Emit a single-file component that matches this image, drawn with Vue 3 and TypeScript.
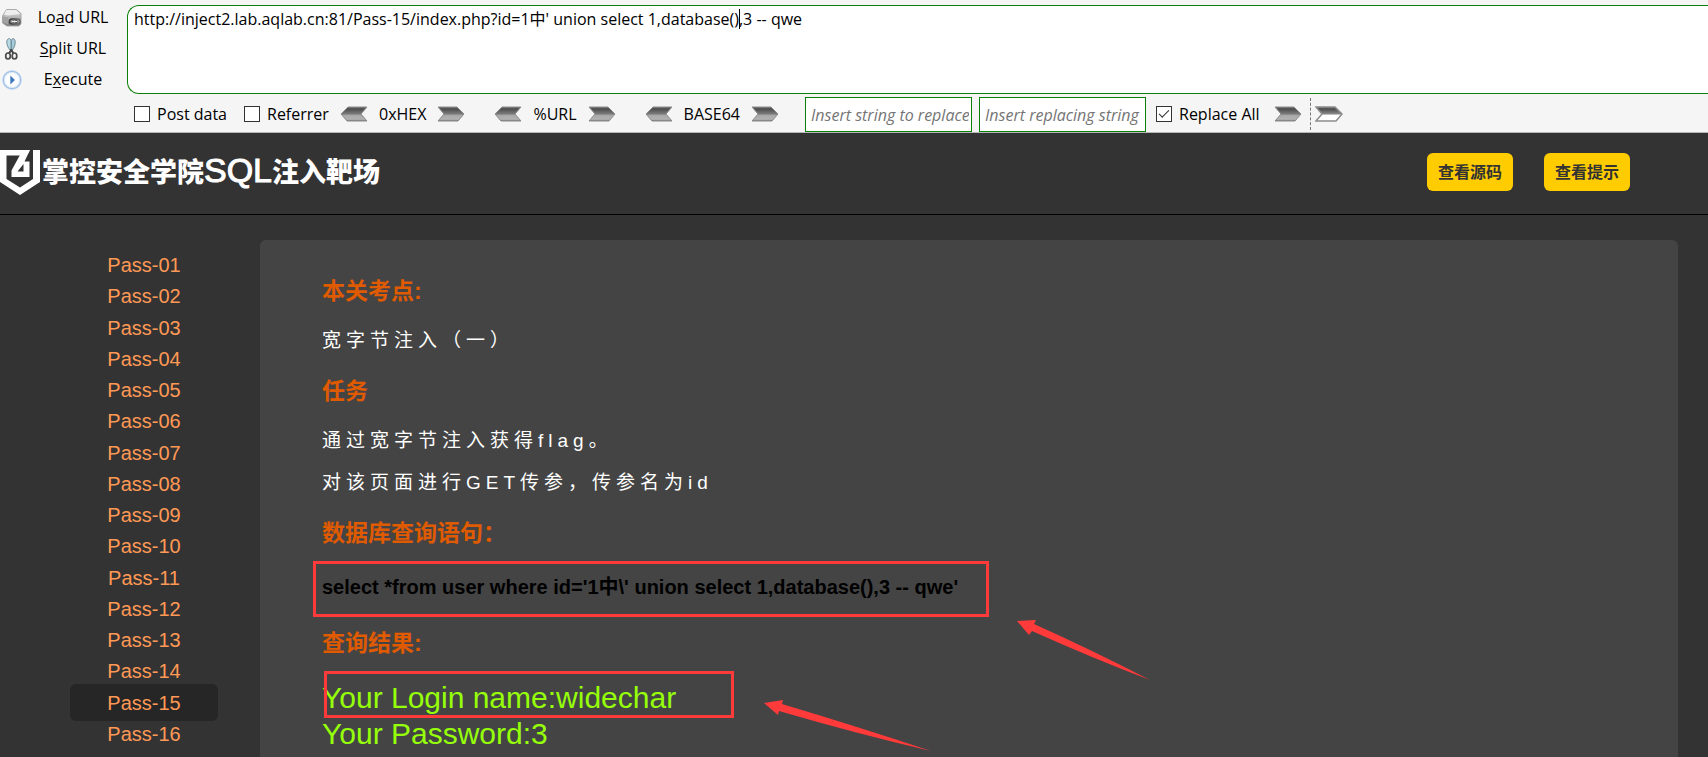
<script setup lang="ts">
import { ref } from 'vue'

const url = ref("http://inject2.lab.aqlab.cn:81/Pass-15/index.php?id=1中' union select 1,database(),3 -- qwe")
const postData = ref(false)
const referrer = ref(false)
const replaceAll = ref(true)
const searchText = ref('')
const replaceText = ref('')

const encoders: string[] = ['0xHEX', '%URL', 'BASE64']
const levels: string[] = Array.from({ length: 16 }, (_, i) => 'Pass-' + String(i + 1).padStart(2, '0'))
const current = 'Pass-15'
</script>

<template>
  <div class="page">
    <svg class="defs" width="0" height="0" aria-hidden="true">
      <defs>
        <linearGradient id="metal" x1="0" y1="0" x2="0" y2="1">
          <stop offset="0" stop-color="#6a6a6a" />
          <stop offset="0.15" stop-color="#4e4e4e" />
          <stop offset="0.5" stop-color="#7c7c7c" />
          <stop offset="0.6" stop-color="#a9a9a9" />
          <stop offset="0.88" stop-color="#b2b2b2" />
          <stop offset="1" stop-color="#6e6e6e" />
        </linearGradient>
        <linearGradient id="metal-open" x1="0" y1="0" x2="0" y2="1">
          <stop offset="0" stop-color="#6a6a6a" />
          <stop offset="0.15" stop-color="#4e4e4e" />
          <stop offset="0.5" stop-color="#8a8a8a" />
          <stop offset="0.58" stop-color="#ffffff" />
          <stop offset="1" stop-color="#ffffff" />
        </linearGradient>
        <linearGradient id="disk" x1="0" y1="0" x2="0" y2="1">
          <stop offset="0" stop-color="#e2e2e2" />
          <stop offset="0.5" stop-color="#b4b4b4" />
          <stop offset="1" stop-color="#777777" />
        </linearGradient>
        <radialGradient id="halo">
          <stop offset="0.5" stop-color="#ffffff" />
          <stop offset="0.72" stop-color="#f1f6fc" />
          <stop offset="0.86" stop-color="#9fbfe6" />
          <stop offset="1" stop-color="#dbe8f8" />
        </radialGradient>
      </defs>
    </svg>

    <section class="hackbar">
      <div class="actions">
        <button type="button" class="action">
          <svg width="20" height="20" viewBox="0 0 20 20">
            <path d="M4.500 1.500h10l4.500 4v10.500l-2 2h-12l-4.500-3v-7z" fill="url(#disk)" stroke="#9a9a9a" stroke-width="0.800" />
            <path d="M4.500 2h9.500l4 4-12 1.500-4-1z" fill="#eeeeee" />
            <path d="M1 8.500l5 1v7l-5-2.500z" fill="#a2a2a2" />
            <rect x="7.500" y="11" width="7" height="5" rx="2.500" fill="none" stroke="#444" stroke-width="1.600" />
            <rect x="11" y="11" width="7" height="5" rx="2.500" fill="none" stroke="#666" stroke-width="1.400" />
            <path d="M10 13.500h5" stroke="#eee" stroke-width="1.200" />
          </svg>
          <span class="action-label">Lo<u>a</u>d URL</span>
        </button>
        <button type="button" class="action">
          <svg width="20" height="24" viewBox="0 0 20 24">
            <path d="M5.500 2.500c-1.500 2-.5 7 2.500 10.500h1.300v-9.500c-.8-2-2.800-2.500-3.800-1z" fill="#b9dbe5" stroke="#5f7d88" stroke-width="0.900" />
            <path d="M12.500 2.500c1.500 2 .5 7-2 10.500h-1.300v-9.500c.8-2 2.500-2.500 3.300-1z" fill="#a5ccd9" stroke="#5f7d88" stroke-width="0.900" />
            <path d="M9.500 12.500l-2.500 4M9 12.500l2.500 4" stroke="#444" stroke-width="2" />
            <ellipse cx="6" cy="19" rx="2.300" ry="3" fill="none" stroke="#4a4a4a" stroke-width="1.700" />
            <ellipse cx="12.500" cy="19" rx="2.300" ry="3" fill="none" stroke="#4a4a4a" stroke-width="1.700" />
          </svg>
          <span class="action-label"><u>S</u>plit URL</span>
        </button>
        <button type="button" class="action">
          <svg width="20" height="20" viewBox="0 0 20 20">
            <circle cx="10" cy="10" r="10" fill="url(#halo)" />
            <path d="M8.300 5.500l4.700 4.500-4.700 4.500z" fill="#3f78bf" />
          </svg>
          <span class="action-label">E<u>x</u>ecute</span>
        </button>
      </div>

      <div class="bar-main">
        <div class="url-wrap">
          <textarea v-model="url" class="url" aria-label="URL" spellcheck="false"></textarea>
          <span class="caret"></span>
        </div>
        <div class="tools">
          <label class="check"><input v-model="postData" type="checkbox" />Post data</label>
          <label class="check"><input v-model="referrer" type="checkbox" />Referrer</label>
          <div class="encoders">
            <div v-for="name in encoders" :key="name" class="encoder">
              <button type="button" class="arrow" :aria-label="'Decode ' + name">
                <svg width="28" height="16" viewBox="0 0 28 16">
                  <path d="M27 1H8L1 8l6 7h20l-6-7z" fill="url(#metal)" stroke="#8c8c8c" stroke-width="1" />
                </svg>
              </button>
              <span>{{ name }}</span>
              <button type="button" class="arrow" :aria-label="'Encode ' + name">
                <svg width="28" height="16" viewBox="0 0 28 16">
                  <path d="M1 1h19l7 7-6 7H1l6-7z" fill="url(#metal)" stroke="#8c8c8c" stroke-width="1" />
                </svg>
              </button>
            </div>
          </div>
          <div class="fields">
            <input v-model="searchText" class="field" type="text" aria-label="Search" placeholder="Insert string to replace" />
            <input v-model="replaceText" class="field" type="text" aria-label="Replacement" placeholder="Insert replacing string" />
          </div>
          <label class="check all"><input v-model="replaceAll" type="checkbox" />Replace All</label>
          <div class="run">
            <button type="button" class="arrow" aria-label="Replace">
              <svg width="28" height="16" viewBox="0 0 28 16">
                <path d="M1 1h19l7 7-6 7H1l6-7z" fill="url(#metal)" stroke="#8c8c8c" stroke-width="1" />
              </svg>
            </button>
            <span class="divider"></span>
            <button type="button" class="arrow" aria-label="Replace once">
              <svg width="28" height="16" viewBox="0 0 28 16">
                <path d="M1 1h19l7 7-6 7H1l6-7z" fill="url(#metal-open)" stroke="#8c8c8c" stroke-width="1.500" />
              </svg>
            </button>
          </div>
        </div>
      </div>
    </section>

    <header class="header">
      <h1 class="brand">
        <svg width="40" height="46" viewBox="0 0 40 46" aria-hidden="true">
          <path d="M0 1H30L26.500 6.500H6.500V30L20 38.500L33 30V1H40V33L20 46L0 33z" fill="#fff" />
          <path d="M30 1L24.500 12.500H29.500V28H11.500V21.500L20.500 5H24zM23.500 15L17.500 22.500H23.500z" fill="#fff" fill-rule="evenodd" />
        </svg>
        <span>掌控安全学院<span class="latin">SQL</span>注入靶场</span>
      </h1>
      <div class="header-actions">
        <button type="button" class="pill">查看源码</button>
        <button type="button" class="pill">查看提示</button>
      </div>
    </header>

    <div class="body">
      <nav class="nav">
        <ul>
          <li v-for="level in levels" :key="level">
            <a href="#" :class="{ active: level === current }">{{ level }}</a>
          </li>
        </ul>
      </nav>

      <main class="panel">
        <h2>本关考点:</h2>
        <p>宽字节注入（一）</p>
        <h2>任务</h2>
        <p>通过宽字节注入获得flag。</p>
        <p>对该页面进行GET传参，传参名为id</p>
        <h2>数据库查询语句：</h2>
        <div class="query">select *from user where id='1中\' union select 1,database(),3 -- qwe'<span class="mark mark-query"></span></div>
        <h2>查询结果:</h2>
        <div class="result">
          <div>Your Login name:widechar</div>
          <div>Your Password:3</div>
          <span class="mark mark-result"></span>
        </div>
        <svg class="pointer pointer-query" width="134" height="62" viewBox="0 0 134 62" aria-hidden="true">
          <path d="M0 1L19 0L17 4Q75 30 133 60Q75 38 15 11L12 15z" fill="#ff3a3a" />
        </svg>
        <svg class="pointer pointer-result" width="168" height="52" viewBox="0 0 168 52" aria-hidden="true">
          <path d="M0 3L19 0L18 4Q95 27 167 51Q90 33 15 11L14 15z" fill="#ff3a3a" />
        </svg>
      </main>
    </div>
  </div>
</template>

<style>
body {
  background: #333;
}
</style>

<style scoped>
.page {
  display: flex;
  flex-direction: column;
  min-height: 100vh;
  overflow: hidden;
  background: #333;
  font-family: "Liberation Sans", "Noto Sans CJK SC", sans-serif;
}

.defs {
  position: absolute;
}

button {
  margin: 0;
  padding: 0;
  border: 0;
  background: none;
  font: inherit;
  color: inherit;
  cursor: pointer;
}

svg {
  display: block;
  flex: none;
}

/* toolbar */
.hackbar {
  display: flex;
  border-bottom: 1px solid #b5b8b8;
  background: #f5f5f5;
  color: #000;
  font: 16px/20px "Open Sans", "Noto Sans CJK SC", sans-serif;
}

.actions {
  display: flex;
  flex-direction: column;
  width: 124px;
  padding: 2px 0 0 2px;
  box-sizing: border-box;
}

.action {
  display: flex;
  align-items: center;
  height: 31px;
}

.action-label {
  flex: 1;
  padding-bottom: 2px;
  text-align: center;
}

u {
  text-underline-offset: 2px;
}

.bar-main {
  flex: 1;
  min-width: 0;
  padding: 5px 0 0 3px;
}

.url-wrap {
  position: relative;
}

.url {
  display: block;
  box-sizing: border-box;
  width: 100%;
  height: 89px;
  padding: 3px 6px;
  border: 1px solid #0a7f0a;
  border-right: 0;
  border-radius: 12px 0 0 12px;
  outline: none;
  resize: none;
  background: #fff;
  color: #000;
  font: inherit;
}

.caret {
  position: absolute;
  top: 4px;
  left: 612px;
  width: 1px;
  height: 20px;
  background: #000;
}

.tools {
  display: flex;
  align-items: center;
  height: 35px;
  margin-top: 3px;
  padding-left: 7px;
  white-space: nowrap;
}

.check {
  display: flex;
  align-items: center;
  gap: 7px;
  width: 110px;
  padding-bottom: 2px;
}

.check input {
  appearance: none;
  display: grid;
  place-items: center;
  flex: none;
  width: 16px;
  height: 16px;
  margin: 0;
  border: 1px solid #333;
  background: #fff;
}

.check input:checked::after {
  content: "";
  width: 9px;
  height: 4px;
  margin-bottom: 3px;
  border: solid #333;
  border-width: 0 0 1px 1px;
  transform: rotate(-45deg);
}

.encoders {
  display: flex;
  gap: 29px;
  margin-left: -14px;
  padding-bottom: 2px;
}

.encoder {
  display: flex;
  align-items: center;
  gap: 11px;
}

.fields {
  display: flex;
  gap: 7px;
  margin-left: 26px;
}

.field {
  box-sizing: border-box;
  width: 167px;
  height: 35px;
  padding: 0 2px 0 5px;
  border: 1px solid #0a7f0a;
  border-radius: 0;
  outline: none;
  background: #fff;
  color: #000;
  font: inherit;
}

.field::placeholder {
  color: #757575;
  font-style: italic;
  opacity: 1;
}

.all {
  margin-left: 10px;
  width: auto;
}

.run {
  display: flex;
  align-items: center;
  margin-left: 14px;
  padding-bottom: 2px;
}

.divider {
  height: 32px;
  margin: 0 4px 0 8px;
  border-left: 1px dashed #777;
}

/* site header */
.header {
  display: flex;
  align-items: center;
  justify-content: space-between;
  box-sizing: border-box;
  height: 82px;
  border-bottom: 1px solid #000;
  padding: 0 78px 4px 0;
}

.brand {
  display: flex;
  align-items: center;
  gap: 2px;
  margin: 0;
  color: #fff;
  font-size: 27px;
  font-weight: 900;
  line-height: 36px;
}

.latin {
  font-size: 34px;
  font-weight: 400;
  -webkit-text-stroke: 1px #fff;
}

.header-actions {
  display: flex;
  gap: 31px;
}

.pill {
  height: 38px;
  padding: 0 11px 2px;
  border-radius: 6px;
  background: #fc0;
  color: #333;
  font-size: 16px;
  font-weight: 700;
}

/* content */
.body {
  display: flex;
  flex: 1;
  padding: 25px 30px 0 0;
}

.nav {
  width: 260px;
  flex: none;
  padding: 9px 42px 0 70px;
  box-sizing: border-box;
}

.nav ul {
  display: grid;
  grid-template-rows: repeat(16, minmax(0, 1fr));
  align-items: center;
  height: 500px;
  margin: 0;
  padding: 0;
  list-style: none;
}

.nav a {
  display: block;
  padding-top: 2px;
  border-radius: 6px;
  color: #ff9955;
  font-size: 20px;
  line-height: 35px;
  text-align: center;
  text-decoration: none;
}

.nav a.active {
  background: #262626;
}

.panel {
  position: relative;
  flex: 1;
  min-width: 0;
  padding: 22px 62px 5px;
  border-radius: 6px 6px 0 0;
  background: #444;
}

.panel h2 {
  margin: 0;
  color: #e05a00;
  font-size: 23px;
  font-weight: 700;
  line-height: 58px;
}

.panel p {
  margin: 0;
  color: #fff;
  font-size: 19px;
  line-height: 42px;
  letter-spacing: 5px;
}

.query {
  position: relative;
  width: fit-content;
  padding-bottom: 2px;
  color: #000;
  font-size: 20px;
  font-weight: 700;
  line-height: 50px;
}

.result {
  position: relative;
  width: fit-content;
  padding-top: 8px;
  color: #96ff0a;
  font-size: 30px;
  line-height: 36px;
}

.mark {
  position: absolute;
  box-sizing: border-box;
  border: 3px solid #ff3a3a;
}

.mark-query {
  top: -1px;
  left: -9px;
  width: 676px;
  height: 56px;
}

.mark-result {
  top: -1px;
  left: 2px;
  width: 410px;
  height: 47px;
}

.pointer {
  position: absolute;
}

.pointer-query {
  top: 380px;
  left: 757px;
}

.pointer-result {
  top: 460px;
  left: 504px;
}
</style>
